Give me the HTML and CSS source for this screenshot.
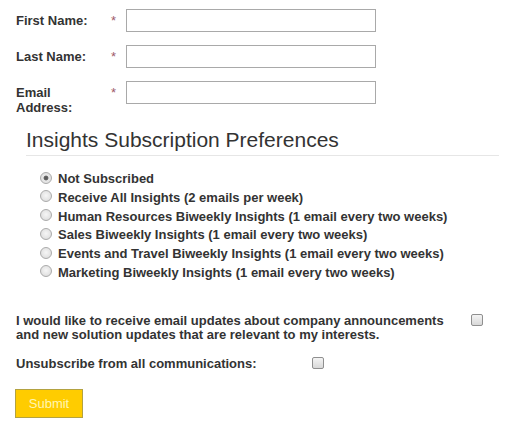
FILE: index.html
```html
<!DOCTYPE html>
<html lang="en">
<head>
<meta charset="utf-8">
<title>Subscription form</title>
<link rel="stylesheet" href="styles.css">
</head>
<body>
<form class="form">
  <div class="field">
    <label class="field-label" for="fn">First Name:</label>
    <span class="req">*</span>
    <input class="text-input" id="fn" type="text">
  </div>
  <div class="field">
    <label class="field-label" for="ln">Last Name:</label>
    <span class="req">*</span>
    <input class="text-input" id="ln" type="text">
  </div>
  <div class="field">
    <label class="field-label" for="em">Email<br>Address:</label>
    <span class="req">*</span>
    <input class="text-input" id="em" type="text">
  </div>

  <h2 class="prefs-title">Insights Subscription Preferences</h2>
  <div class="radio-list">
    <label class="radio-row"><input class="radio" type="radio" name="ins" checked><span>Not Subscribed</span></label>
    <label class="radio-row"><input class="radio" type="radio" name="ins"><span>Receive All Insights (2 emails per week)</span></label>
    <label class="radio-row"><input class="radio" type="radio" name="ins"><span>Human Resources Biweekly Insights (1 email every two weeks)</span></label>
    <label class="radio-row"><input class="radio" type="radio" name="ins"><span>Sales Biweekly Insights (1 email every two weeks)</span></label>
    <label class="radio-row"><input class="radio" type="radio" name="ins"><span>Events and Travel Biweekly Insights (1 email every two weeks)</span></label>
    <label class="radio-row"><input class="radio" type="radio" name="ins"><span>Marketing Biweekly Insights (1 email every two weeks)</span></label>
  </div>

  <div class="check-row consent">
    <span class="check-text consent-text">I would like to receive email updates about company announcements and new solution updates that are relevant to my interests.</span>
    <input class="checkbox" type="checkbox">
  </div>
  <div class="check-row unsub">
    <span class="check-text unsub-text">Unsubscribe from all communications:</span>
    <input class="checkbox" type="checkbox">
  </div>

  <button class="submit" type="button">Submit</button>
</form>
</body>
</html>
```
FILE: styles.css
```css
* { box-sizing: border-box; }
html, body { margin: 0; padding: 0; background: #fff; }
body {
  font-family: "Liberation Sans", Arial, sans-serif;
  font-size: 13px;
  color: #333;
}
.form {
  padding: 9px 0 0 16px;
  display: flex;
  flex-direction: column;
  align-items: flex-start;
}
.field {
  display: grid;
  grid-template-columns: 95px 15px 250px;
  align-items: start;
  margin-bottom: 13px;
}
.field:nth-child(3) { margin-bottom: 0; }
.field-label {
  font-weight: bold;
  line-height: 15px;
  padding-top: 4px;
}
.req {
  color: #9e5a6a;
  line-height: 15px;
  padding-top: 4px;
}
.text-input {
  width: 250px;
  height: 23px;
  border: 1px solid #a9a9a9;
  background: #fff;
  margin: 0;
  padding: 2px 4px;
  font: inherit;
}
.prefs-title {
  align-self: stretch;
  margin: 13px 10px 0 10px;
  font-size: 21px;
  font-weight: normal;
  line-height: 24px;
  padding-bottom: 3px;
  border-bottom: 1px solid #e6e6e6;
  color: #333;
}
.radio-list {
  margin-top: 14px;
  padding-left: 24px;
  display: flex;
  flex-direction: column;
}
.radio-row {
  display: flex;
  align-items: flex-start;
  height: 18.8px;
  line-height: 18.8px;
  font-weight: bold;
}
.radio {
  -webkit-appearance: none;
  appearance: none;
  width: 12px;
  height: 12px;
  margin: 1.5px 6px 0 0;
  border: 1px solid #ababab;
  border-radius: 50%;
  background: radial-gradient(circle at 50% 45%, #f6f6f6 0%, #e4e4e4 60%, #d2d2d2 100%);
  flex: none;
}
.radio:checked {
  background: radial-gradient(circle at 50% 50%, #555 0, #666 2px, #e8e8e8 2.8px, #dcdcdc 100%);
}
.check-row {
  display: flex;
  align-items: flex-start;
}
.check-text {
  font-weight: bold;
  line-height: 14.5px;
}
.consent { margin-top: 31px; }
.consent-text { width: 440px; }
.consent .checkbox { margin: 0 0 0 15px; }
.unsub { margin-top: 14px; }
.unsub-text { width: 296px; }
.unsub .checkbox { margin: 0; }
.checkbox {
  -webkit-appearance: none;
  appearance: none;
  width: 12px;
  height: 12px;
  border: 1px solid #8f8f8f;
  border-radius: 2px;
  background: linear-gradient(#f4f4f4, #d8d8d8);
  flex: none;
}
.submit {
  margin-top: 18px;
  margin-left: -1px;
  width: 68px;
  height: 29px;
  padding: 0;
  background: #ffcc00;
  border: 1px solid #b3a241;
  color: #fff6b3;
  font-family: "Liberation Sans", Arial, sans-serif;
  font-size: 13px;
}
```
